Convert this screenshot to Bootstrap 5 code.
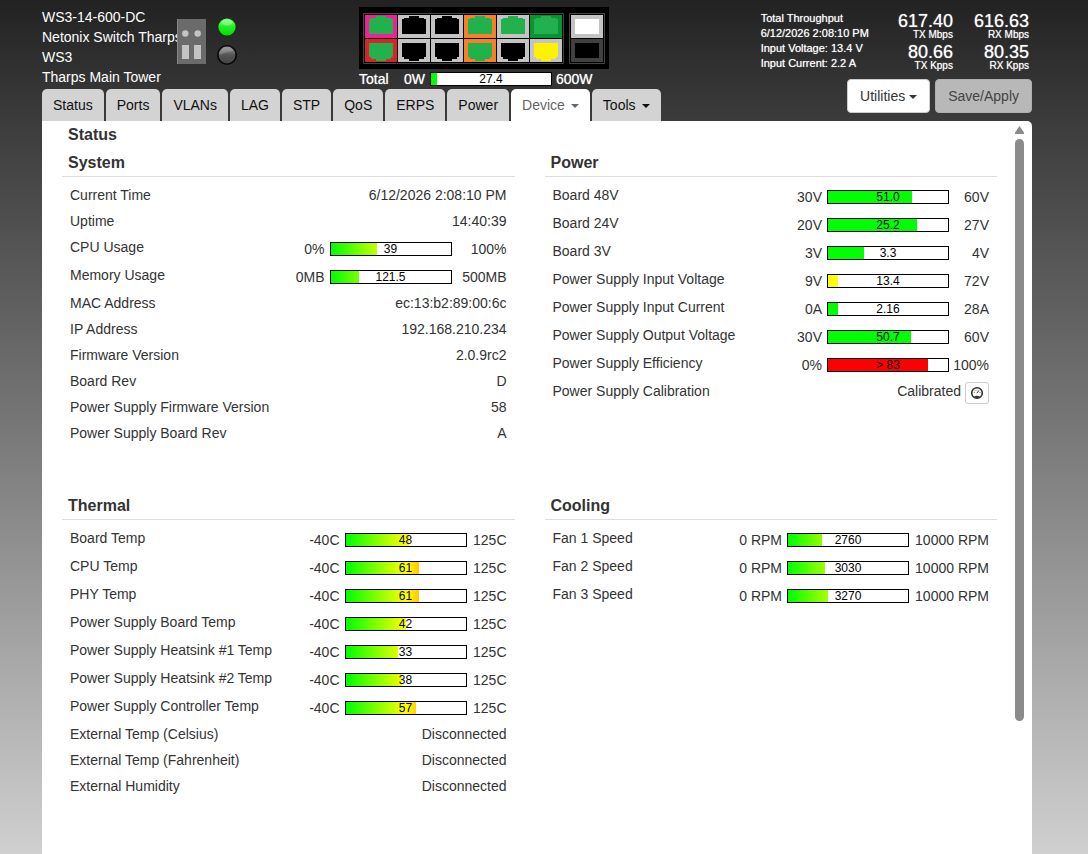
<!DOCTYPE html>
<html lang="en">
<head>
<meta charset="utf-8">
<meta name="viewport" content="width=device-width, initial-scale=1">
<title>Netonix WS3-14-600-DC</title>
<link href="https://cdn.jsdelivr.net/npm/bootstrap@5.3.0/dist/css/bootstrap.min.css" rel="stylesheet">
<style>
  body { font: 14px/20px "Liberation Sans", Arial, sans-serif; color: #333; background: linear-gradient(#222 0%, #383838 12%, #777 50%, #d0d0d0 100%) fixed; padding: 0 56px 0 42px; }
  .glow { text-shadow: 0 0 1px rgba(255,255,255,.7); }
  .masthead { height: 89px; padding-top: 7px; }
  .names { width: 135px; white-space: nowrap; }
  .supply { position: relative; margin-top: 12px; }
  .leds { margin: 9px 0 0 10px; }
  .faceplate { margin-left: 121px; }
  .faceplate svg { display: block; }
  .total-label { width: 45px; }
  .nav-main { gap: 2px; height: 32px; }
  .nav-main .nav-link { color: #111; background: #d3d3d3; border-radius: 5px 5px 0 0; padding: 6px 11px; line-height: 20px; }
  .nav-main .nav-link.active { color: #666; background: #fff; }
  .dropdown-toggle::after { border-width: 4px 4px 0; margin-left: 6px; vertical-align: 2px; }
  .btn-bar { gap: 5px; margin: 8px 0; }
  .btn-bar .btn { font-size: 14px; line-height: 20px; padding: 6px 12px; border-radius: 4px; color: #333; background: #fff; border: 1px solid #ccc; }
  .btn-bar .btn::after { margin-left: 4px; }
  .btn-bar .btn-save { background: #b8b8b8; border-color: #b0b0b0; color: #444; }
  .stats { padding-top: 11px; height: 71px; }
  .stat-text { font-size: 11px; line-height: 15px; }
  .figures { gap: 21px; padding: 1px 3px 0 0; margin-left: 29px; }
  .figures .big { font-size: 18px; line-height: 18px; }
  .figures .unit { font-size: 10px; line-height: 10px; margin-bottom: 3px; }
  .pane { background: #fff; border-radius: 0 5px 0 0; }
  .pane-body { padding: 4px 0 20px 20px; }
  h1, h2 { font-size: 16px; line-height: 20px; font-weight: bold; margin: 0; padding-left: 6px; color: #333; }
  h2 { padding-bottom: 3px; border-bottom: 1px solid #ddd; margin-bottom: 5px; }
  .sections { grid-template-columns: 1fr 1fr; column-gap: 30px; row-gap: 50px; margin-top: 8px; }
  .readings { width: 100%; --max-w: 40px; }
  .readings th { font-weight: normal; padding: 3px 0 3px 8px; vertical-align: top; }
  .readings td { text-align: right; padding: 3px 8px 3px 0; vertical-align: top; }
  .readings .gauge-cell { padding: 5px 8px 3px 0; }
  .gauge-line { display: flex; justify-content: flex-end; align-items: center; }
  .limit { width: var(--max-w); text-align: right; }
  .gauge { position: relative; width: 122px; height: 14px; border: 1px solid #000; background: #fff; margin-left: 5px; overflow: hidden; color: #000; font-size: 12px; line-height: 12px; text-align: center; flex: none; text-shadow: none; }
  .gauge i { position: absolute; inset: 0 auto 0 0; background: #0f0; }
  .gauge i.ramp { background: linear-gradient(90deg, #0f0, #ff0 50%, #f00) 0 0 / 120px 100% no-repeat; }
  .gauge i.low { background: #ff0; }
  .gauge i.alarm { background: #f00; }
  .gauge span { position: relative; }
  .btn-cal { width: 24px; height: 22px; margin: 1px 0 -3px 4px; padding: 0; border: 1px solid #ccc; border-radius: 3px; background: #fff; line-height: 0; vertical-align: top; }
  .scroller { width: 35px; padding: 5px 0 0 18px; }
  .scroller svg { display: block; margin-bottom: 5px; }
  .thumb { width: 9px; height: 80%; border-radius: 5px; background: #8b8b8b; }
</style>
</head>
<body class="min-vh-100 d-flex flex-column">

<header class="d-flex justify-content-between text-white">
  <div>
    <div class="masthead d-flex">
      <div class="names">
        <div>WS3-14-600-DC</div>
        <div>Netonix Switch Tharps</div>
        <div>WS3</div>
        <div>Tharps Main Tower</div>
      </div>
      <svg class="supply flex-shrink-0" width="29" height="45" viewBox="0 0 29 45" role="img" aria-label="Power supply">
        <rect width="29" height="45" fill="#6b6b6b"/><path d="M.5 0v45" stroke="#888"/>
        <g fill="#c4c4c4"><circle cx="8.300" cy="14.500" r="3.200"/><circle cx="20.700" cy="14.500" r="3.200"/><rect x="5" y="26" width="7" height="14"/><rect x="17" y="26" width="7" height="14"/></g>
      </svg>
      <svg class="leds flex-shrink-0" width="22" height="50" viewBox="0 0 22 50" role="img" aria-label="Status lights">
        <defs>
          <linearGradient id="lg" x2="0" y2="1"><stop stop-color="#7f7"/><stop offset=".5" stop-color="#2e2"/><stop offset="1" stop-color="#0d0"/></linearGradient>
          <linearGradient id="ld" x2="0" y2="1"><stop stop-color="#999"/><stop offset=".5" stop-color="#555"/><stop offset="1" stop-color="#444"/></linearGradient>
        </defs>
        <circle cx="11" cy="11" r="9.500" fill="#153a12"/><circle cx="11" cy="11" r="8.600" fill="url(#lg)"/><ellipse cx="11" cy="6.500" rx="5.500" ry="3" fill="#fff" opacity=".3"/>
        <circle cx="11" cy="39" r="10" fill="#080808"/><circle cx="11" cy="39" r="8.400" fill="url(#ld)"/><path d="M3.500 39a7.500 7.500 0 0 1 14-4q-6 0-14 4z" fill="#aaa" opacity=".4"/>
      </svg>
      <div class="faceplate">
        <svg width="250" height="62" viewBox="0 0 250 62" role="img" aria-label="Switch ports">
          <defs>
            <path id="up" d="M4 4h2V3h5V1h10v2h5v1h2v15H4z"/>
            <path id="dn" d="M4 4h24v14h-2v2h-5v2H11v-2H6v-2H4z"/>
          </defs>
          <rect width="250" height="62"/>
          <path fill="none" stroke="#444" d="M4.500 6.500h200v50H4.500zM210.500 6.500h35v50h-35z"/>
          <g fill="#c3c3c3">
            <rect x="6" y="8" width="32" height="23" fill="#f0209a"/><rect x="39" y="8" width="32" height="23"/><rect x="72" y="8" width="32" height="23"/><rect x="105" y="8" width="32" height="23" fill="#f58025"/><rect x="138" y="8" width="32" height="23"/><rect x="171" y="8" width="32" height="23" fill="#079433"/>
            <rect x="6" y="32" width="32" height="23" fill="#d82328"/><rect x="39" y="32" width="32" height="23"/><rect x="72" y="32" width="32" height="23"/><rect x="105" y="32" width="32" height="23" fill="#f58025"/><rect x="138" y="32" width="32" height="23"/><rect x="171" y="32" width="32" height="23"/>
            <rect x="212" y="8" width="32" height="23"/><rect x="212" y="32" width="32" height="23" fill="#404040"/>
          </g>
          <g fill="#22b14c">
            <use href="#up" x="6" y="8"/><use href="#up" x="39" y="8" fill="#000"/><use href="#up" x="72" y="8" fill="#000"/><use href="#up" x="105" y="8"/><use href="#up" x="138" y="8"/><use href="#up" x="171" y="8"/>
            <use href="#dn" x="6" y="32"/><use href="#dn" x="39" y="32" fill="#000"/><use href="#dn" x="72" y="32" fill="#000"/><use href="#dn" x="105" y="32"/><use href="#dn" x="138" y="32" fill="#000"/><use href="#dn" x="171" y="32" fill="#fff200"/>
          </g>
          <rect x="216" y="12" width="24" height="15" fill="#fff"/><rect x="216" y="36" width="24" height="15"/>
        </svg>
        <div class="d-flex align-items-center glow">
          <span class="total-label">Total</span><span>0W</span>
          <div class="gauge"><i style="width:5%"></i><span>27.4</span></div>
          <span class="ms-1">600W</span>
        </div>
      </div>
    </div>
    <nav class="nav nav-main flex-nowrap">
      <a class="nav-link" href="#">Status</a>
      <a class="nav-link" href="#">Ports</a>
      <a class="nav-link" href="#">VLANs</a>
      <a class="nav-link" href="#">LAG</a>
      <a class="nav-link" href="#">STP</a>
      <a class="nav-link" href="#">QoS</a>
      <a class="nav-link" href="#">ERPS</a>
      <a class="nav-link" href="#">Power</a>
      <a class="nav-link dropdown-toggle active" href="#">Device</a>
      <a class="nav-link dropdown-toggle" href="#">Tools</a>
    </nav>
  </div>

  <div>
    <div class="stats d-flex justify-content-end glow">
      <div class="stat-text">
        <div>Total Throughput</div>
        <div>6/12/2026 2:08:10 PM</div>
        <div>Input Voltage: 13.4 V</div>
        <div>Input Current: 2.2 A</div>
      </div>
      <div class="figures d-flex text-end">
        <div><div class="big">617.40</div><div class="unit">TX Mbps</div><div class="big">80.66</div><div class="unit">TX Kpps</div></div>
        <div><div class="big">616.63</div><div class="unit">RX Mbps</div><div class="big">80.35</div><div class="unit">RX Kpps</div></div>
      </div>
    </div>
    <div class="btn-bar d-flex justify-content-end">
      <button type="button" class="btn dropdown-toggle">Utilities</button>
      <button type="button" class="btn btn-save">Save/Apply</button>
    </div>
  </div>
</header>

<main class="pane d-flex flex-fill">
  <div class="pane-body flex-fill">
    <h1>Status</h1>
    <div class="sections d-grid">
      <section>
        <h2>System</h2>
        <table class="readings" style="--max-w:55px">
          <tr><th scope="row">Current Time</th><td>6/12/2026 2:08:10 PM</td></tr>
          <tr><th scope="row">Uptime</th><td>14:40:39</td></tr>
          <tr><th scope="row">CPU Usage</th><td class="gauge-cell"><div class="gauge-line">0%<div class="gauge"><i class="ramp" style="width:39%"></i><span>39</span></div><span class="limit">100%</span></div></td></tr>
          <tr><th scope="row">Memory Usage</th><td class="gauge-cell"><div class="gauge-line">0MB<div class="gauge"><i class="ramp" style="width:24%"></i><span>121.5</span></div><span class="limit">500MB</span></div></td></tr>
          <tr><th scope="row">MAC Address</th><td>ec:13:b2:89:00:6c</td></tr>
          <tr><th scope="row">IP Address</th><td>192.168.210.234</td></tr>
          <tr><th scope="row">Firmware Version</th><td>2.0.9rc2</td></tr>
          <tr><th scope="row">Board Rev</th><td>D</td></tr>
          <tr><th scope="row">Power Supply Firmware Version</th><td>58</td></tr>
          <tr><th scope="row">Power Supply Board Rev</th><td>A</td></tr>
        </table>
      </section>
      <section>
        <h2>Power</h2>
        <table class="readings">
          <tr><th scope="row">Board 48V</th><td class="gauge-cell"><div class="gauge-line">30V<div class="gauge"><i style="width:70%"></i><span>51.0</span></div><span class="limit">60V</span></div></td></tr>
          <tr><th scope="row">Board 24V</th><td class="gauge-cell"><div class="gauge-line">20V<div class="gauge"><i style="width:74%"></i><span>25.2</span></div><span class="limit">27V</span></div></td></tr>
          <tr><th scope="row">Board 3V</th><td class="gauge-cell"><div class="gauge-line">3V<div class="gauge"><i style="width:30%"></i><span>3.3</span></div><span class="limit">4V</span></div></td></tr>
          <tr><th scope="row">Power Supply Input Voltage</th><td class="gauge-cell"><div class="gauge-line">9V<div class="gauge"><i class="low" style="width:8%"></i><span>13.4</span></div><span class="limit">72V</span></div></td></tr>
          <tr><th scope="row">Power Supply Input Current</th><td class="gauge-cell"><div class="gauge-line">0A<div class="gauge"><i style="width:8%"></i><span>2.16</span></div><span class="limit">28A</span></div></td></tr>
          <tr><th scope="row">Power Supply Output Voltage</th><td class="gauge-cell"><div class="gauge-line">30V<div class="gauge"><i style="width:69%"></i><span>50.7</span></div><span class="limit">60V</span></div></td></tr>
          <tr><th scope="row">Power Supply Efficiency</th><td class="gauge-cell"><div class="gauge-line">0%<div class="gauge"><i class="alarm" style="width:83%"></i><span>&gt; 83</span></div><span class="limit">100%</span></div></td></tr>
          <tr><th scope="row">Power Supply Calibration</th><td>Calibrated<button type="button" class="btn-cal" aria-label="Calibrate"><svg width="14" height="14" viewBox="0 0 14 14"><circle cx="7" cy="7" r="5.300" fill="none" stroke="#333" stroke-width="1.600"/><path d="M3.800 6.500h.8M5 4.500l.4.500M7 3.800v.6M9.600 6.500h.8" stroke="#333" stroke-width=".8"/><path d="M6.800 7.200L9 4.400" stroke="#333"/><path d="M4 10.500Q7 9 10 10.500L7 12.500z" fill="#333"/></svg></button></td></tr>
        </table>
      </section>
      <section>
        <h2>Thermal</h2>
        <table class="readings">
          <tr><th scope="row">Board Temp</th><td class="gauge-cell"><div class="gauge-line">-40C<div class="gauge"><i class="ramp" style="width:53%"></i><span>48</span></div><span class="limit">125C</span></div></td></tr>
          <tr><th scope="row">CPU Temp</th><td class="gauge-cell"><div class="gauge-line">-40C<div class="gauge"><i class="ramp" style="width:61%"></i><span>61</span></div><span class="limit">125C</span></div></td></tr>
          <tr><th scope="row">PHY Temp</th><td class="gauge-cell"><div class="gauge-line">-40C<div class="gauge"><i class="ramp" style="width:61%"></i><span>61</span></div><span class="limit">125C</span></div></td></tr>
          <tr><th scope="row">Power Supply Board Temp</th><td class="gauge-cell"><div class="gauge-line">-40C<div class="gauge"><i class="ramp" style="width:50%"></i><span>42</span></div><span class="limit">125C</span></div></td></tr>
          <tr><th scope="row">Power Supply Heatsink #1 Temp</th><td class="gauge-cell"><div class="gauge-line">-40C<div class="gauge"><i class="ramp" style="width:44%"></i><span>33</span></div><span class="limit">125C</span></div></td></tr>
          <tr><th scope="row">Power Supply Heatsink #2 Temp</th><td class="gauge-cell"><div class="gauge-line">-40C<div class="gauge"><i class="ramp" style="width:47%"></i><span>38</span></div><span class="limit">125C</span></div></td></tr>
          <tr><th scope="row">Power Supply Controller Temp</th><td class="gauge-cell"><div class="gauge-line">-40C<div class="gauge"><i class="ramp" style="width:59%"></i><span>57</span></div><span class="limit">125C</span></div></td></tr>
          <tr><th scope="row">External Temp (Celsius)</th><td>Disconnected</td></tr>
          <tr><th scope="row">External Temp (Fahrenheit)</th><td>Disconnected</td></tr>
          <tr><th scope="row">External Humidity</th><td>Disconnected</td></tr>
        </table>
      </section>
      <section>
        <h2>Cooling</h2>
        <table class="readings" style="--max-w:80px">
          <tr><th scope="row">Fan 1 Speed</th><td class="gauge-cell"><div class="gauge-line">0 RPM<div class="gauge"><i class="ramp" style="width:28%"></i><span>2760</span></div><span class="limit">10000 RPM</span></div></td></tr>
          <tr><th scope="row">Fan 2 Speed</th><td class="gauge-cell"><div class="gauge-line">0 RPM<div class="gauge"><i class="ramp" style="width:31%"></i><span>3030</span></div><span class="limit">10000 RPM</span></div></td></tr>
          <tr><th scope="row">Fan 3 Speed</th><td class="gauge-cell"><div class="gauge-line">0 RPM<div class="gauge"><i class="ramp" style="width:33%"></i><span>3270</span></div><span class="limit">10000 RPM</span></div></td></tr>
        </table>
      </section>
    </div>
  </div>
  <div class="scroller flex-shrink-0" aria-hidden="true">
    <svg width="9" height="8" viewBox="0 0 9 8"><path d="M4.500 0L9 6.500V8H0V6.500z" fill="#8b8b8b"/></svg>
    <div class="thumb"></div>
  </div>
</main>

<script src="https://cdn.jsdelivr.net/npm/bootstrap@5.3.0/dist/js/bootstrap.bundle.min.js"></script>
</body>
</html>
